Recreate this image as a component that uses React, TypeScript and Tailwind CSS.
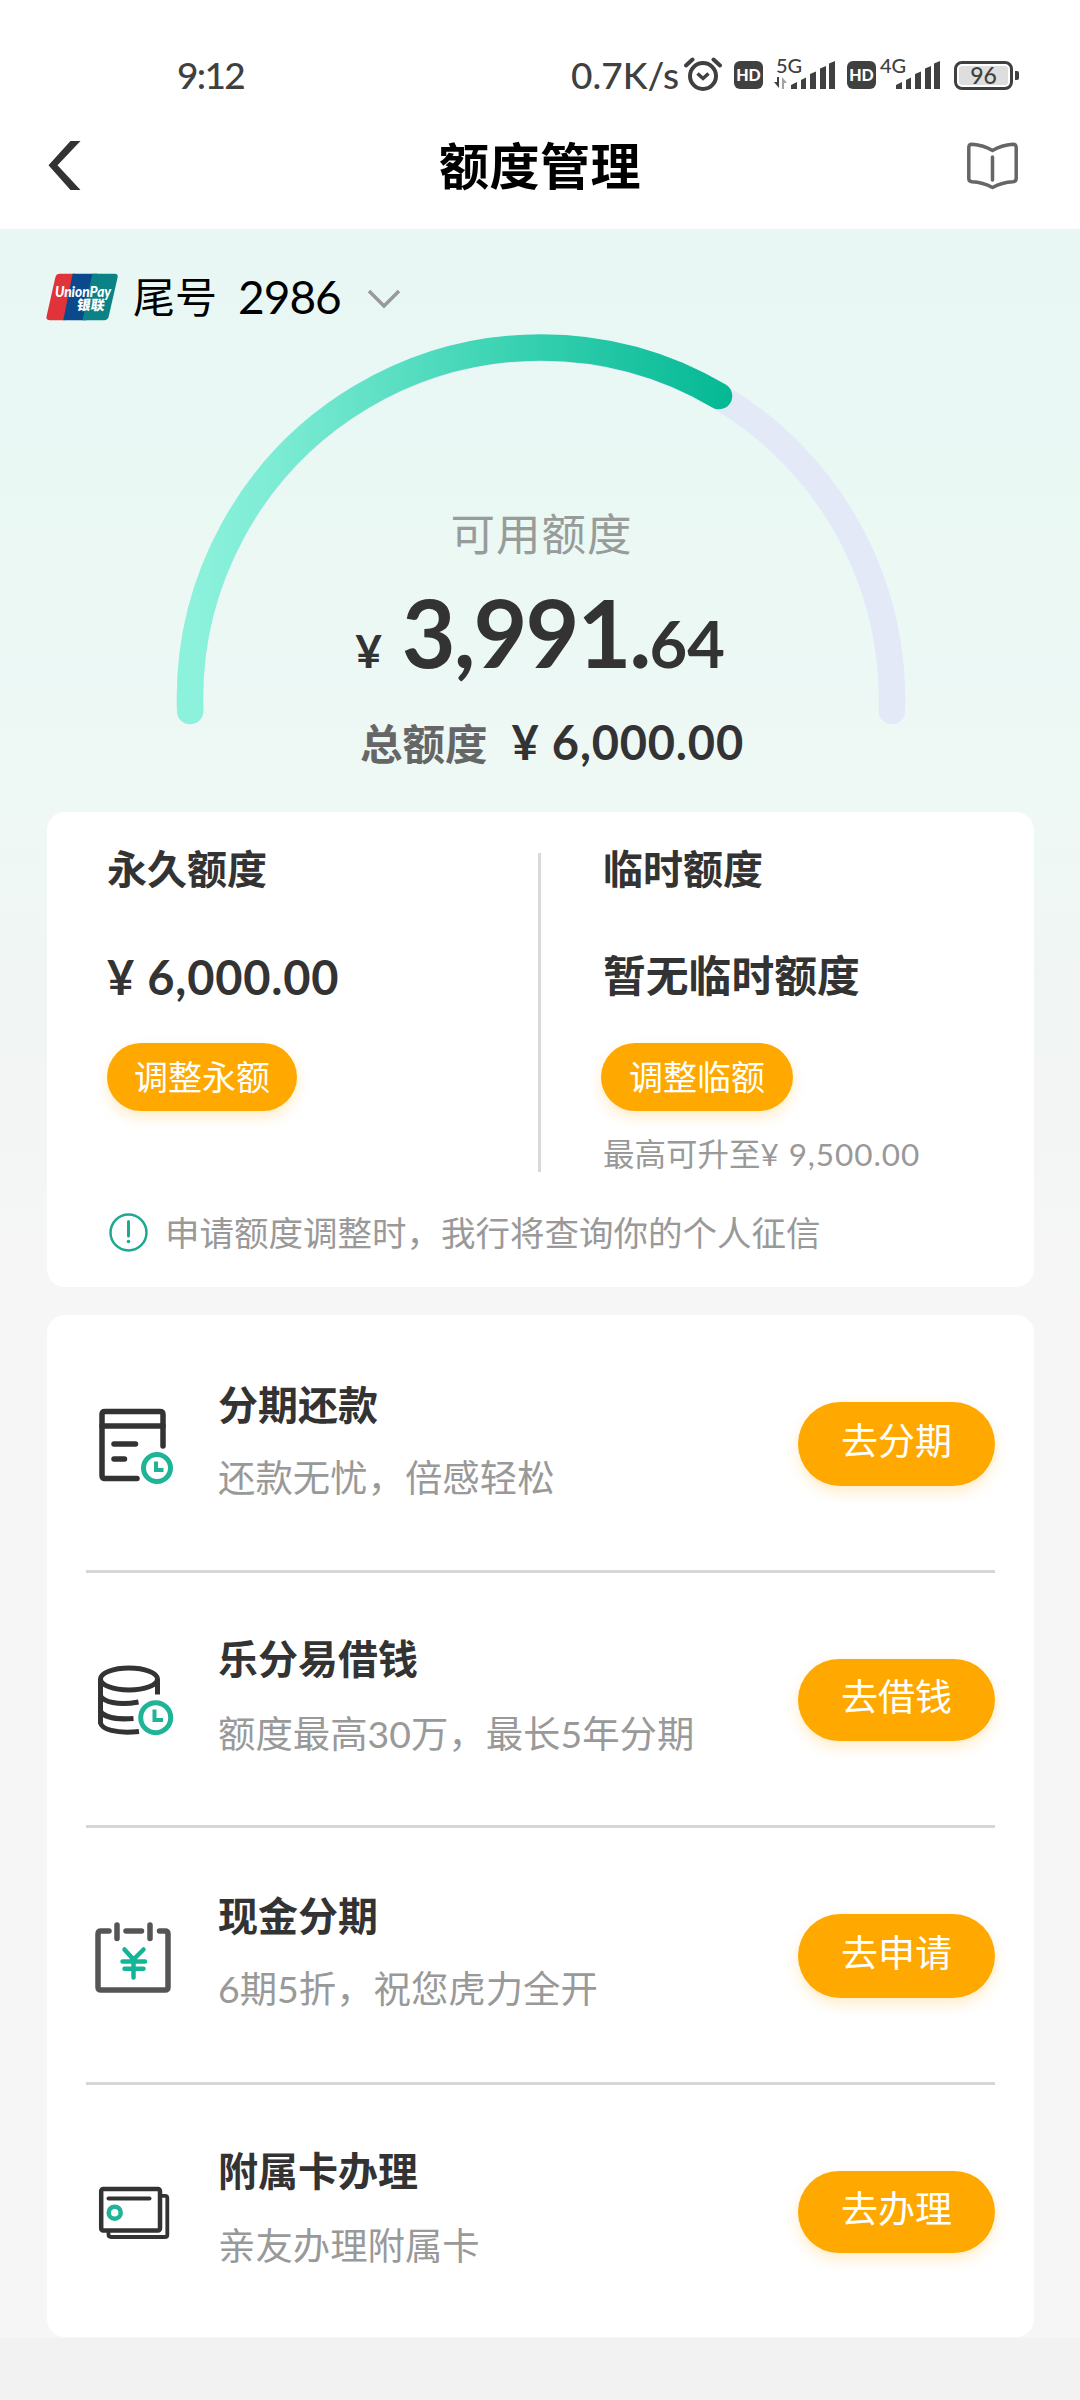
import type { ReactNode } from "react";
import { clsx } from "clsx";

const SignalBars = () => (
  <svg width="44" height="28" viewBox="0 0 44 28" fill="#404040">
    <path d="M0 28v-4l6-3v7z" />
    <path d="M10 28v-9l5-2.5V28z" />
    <path d="M19 28V13l6-2.5V28z" />
    <path d="M29 28V7.5l6-2.5V28z" />
    <path d="M38 28V2.5L44 0v28z" />
  </svg>
);

const HdBadge = () => (
  <div className="flex h-7 w-[29px] items-center justify-center rounded-[6px] bg-[#404040] text-[16px] font-black leading-none text-white">
    HD
  </div>
);

const StatusBar = () => (
  <div className="flex h-[100px] items-center pl-[177px] pr-[61px] pt-[50px] text-[#404040]">
    <span className="-mt-[2px] text-[37px] font-medium leading-none tracking-[-1.7px]">9:12</span>
    <span className="-mt-[2px] ml-auto mr-[5px] text-[37px] font-medium leading-none">0.7K/s</span>
    <svg className="mr-[12px] -mt-[3px]" width="38" height="36" viewBox="0 0 38 36" fill="none" stroke="#404040" strokeWidth="4">
      <circle cx="19" cy="20" r="13" />
      <path d="M13.5 17.5l5.5 5 5.5-5" strokeWidth="3.5" />
      <path d="M2 9.5l6.5-6M36 9.5l-6.5-6" strokeWidth="4" strokeLinecap="round" />
    </svg>
    <HdBadge />
    <div className="relative ml-[28px]">
      <span className="absolute -left-[15px] -top-[6px] text-[20px] font-medium leading-none">5G</span>
      <svg className="absolute -left-[17px] top-[16px]" width="14" height="12" viewBox="0 0 14 12">
        <path d="M5 0v11L0 5h3V0z" fill="#404040" />
        <path d="M8 12V0l5 6h-3v6z" fill="#a3a3a3" />
      </svg>
      <SignalBars />
    </div>
    <div className="ml-[12px]">
      <HdBadge />
    </div>
    <div className="relative ml-[20px]">
      <span className="absolute -left-[16px] -top-[6px] text-[20px] font-medium leading-none">4G</span>
      <SignalBars />
    </div>
    <div className="ml-[14px] flex h-[29px] w-[59px] items-center justify-center rounded-[8px] border-3 border-[#404040] p-[2px]">
      <span className="flex h-full w-full items-center justify-center rounded-[3px] bg-[#dedede] text-[23px] font-medium leading-none">96</span>
    </div>
    <span className="ml-[2px] h-[9px] w-[4px] rounded-r-[2px] bg-[#404040]" />
  </div>
);

const NavBar = () => (
  <div className="flex h-[129px] items-center justify-between pl-[48px] pr-[61px] pt-[2px]">
    <svg width="66" height="49" viewBox="0 0 66 49" fill="#333">
      <path d="M22.5 0H32.5L9.5 24.2 32.5 49H22.5L.5 24.2z" />
    </svg>
    <h1 className="text-[50px] font-bold leading-none tracking-[0.5px] text-black">额度管理</h1>
    <svg width="53" height="50" viewBox="0 0 53 50" fill="none" stroke="#666" strokeWidth="3.5" strokeLinecap="round" strokeLinejoin="round">
      <path d="M26.5 9.5C20 5.5 13 3.800 6 3.300Q2.8 3.300 2.8 6.5V37.5Q2.8 40.5 6 40.8C14 41.200 20 43 26.5 46.5C33 43 39 41.200 47 40.8Q50.2 40.5 50.2 37.5V6.5Q50.2 3.300 47 3.300C40 3.800 33 5.5 26.5 9.5z" />
      <path d="M26.5 16v23" />
    </svg>
  </div>
);

const UnionPayLogo = () => (
  <svg width="73" height="48" viewBox="0 0 74 48">
    <path d="M14 .5H30L19 47.5H4Q-.5 47.5 .7 43L9.5 4Q10.5 .5 14 .5z" fill="#e0343a" />
    <path d="M27 .5H52L41 47.5H17.5z" fill="#0a4a8c" />
    <path d="M47 .5H69.5Q73.5 .5 72.5 4.5L63.5 44Q62.5 47.5 59 47.5H37z" fill="#0b8285" />
    <text x="9" y="24" fill="#fff" fontSize="15" fontWeight="900" fontStyle="italic" textLength="57" lengthAdjust="spacingAndGlyphs">
      UnionPay
    </text>
    <text x="31" y="37" fill="#fff" fontSize="14" fontWeight="900" transform="skewX(-8) translate(5 0)">
      银联
    </text>
  </svg>
);

const CardSelector = () => (
  <div className="flex h-[96px] items-center pl-[46px] pt-[40px]">
    <UnionPayLogo />
    <span className="ml-[14px] text-[42px] leading-none text-black">尾号</span>
    <span className="ml-[21px] text-[46px] leading-none tracking-[-1px] text-black">2986</span>
    <svg className="ml-[26px] mt-[3px]" width="34" height="20" viewBox="0 0 34 20" fill="none" stroke="#999" strokeWidth="3.5">
      <path d="M2 2l15 15L32 2" />
    </svg>
  </div>
);

const LimitGauge = () => (
  <div className="grid h-[487px] grid-cols-1 grid-rows-1">
    <svg className="col-start-1 row-start-1" width="1080" height="487" viewBox="0 0 1080 487" fill="none" strokeWidth="26.5" strokeLinecap="round">
      <defs>
        <linearGradient id="gauge" x1="190" y1="0" x2="732" y2="0" gradientUnits="userSpaceOnUse">
          <stop offset="0" stopColor="#8df2dc" />
          <stop offset="0.15" stopColor="#7eecd5" />
          <stop offset="0.55" stopColor="#3fd5b5" />
          <stop offset="1" stopColor="#04b894" />
        </linearGradient>
      </defs>
      <path d="M190.2 386A351 351 0 1 1 891.8 386" stroke="#e4e9f7" />
      <path d="M190.2 386A351 351 0 0 1 719 71" stroke="url(#gauge)" />
    </svg>
    <div className="col-start-1 row-start-1 flex flex-col items-center">
      <div className="ml-[3px] mt-[187px] text-[44.5px] leading-none tracking-[1px] text-[#979c9a]">可用额度</div>
      <div className="mt-[29px] flex items-baseline font-bold leading-none text-[#333]">
        <span className="text-[46px]">¥</span>
        <span className="ml-[20px] text-[93px] tracking-[-2px]">3,991.</span>
        <span className="text-[65px]">64</span>
      </div>
      <div className="mt-[40px] ml-[24px] flex items-baseline leading-none">
        <span className="text-[42.5px] font-bold text-[#666]">总额度</span>
        <span className="ml-[24px] text-[47px] font-bold tracking-[0.8px] text-[#333]">¥ 6,000.00</span>
      </div>
    </div>
  </div>
);

const PillButton = ({ className, children }: { className?: string; children: ReactNode }) => (
  <button
    className={clsx(
      "flex items-center justify-center rounded-full bg-[#ffa900] leading-none text-white shadow-[0_6px_14px_rgba(255,169,0,0.22)]",
      className
    )}
  >
    {children}
  </button>
);

const LimitCard = () => (
  <section className="ml-[47px] mr-[46px] h-[475px] rounded-[18px] bg-white pt-[41px]">
    <div className="flex h-[319px]">
      <div className="flex w-[491px] flex-col items-start pl-[60px]">
        <h2 className="-mt-[4px] text-[40px] font-bold leading-none text-[#333]">永久额度</h2>
        <div className="mt-[65px] text-[47px] font-bold leading-none tracking-[0.8px] text-[#333]">¥ 6,000.00</div>
        <PillButton className="mt-[42px] h-[68px] w-[190px] text-[34px]">调整永额</PillButton>
      </div>
      <div className="w-[3px] shrink-0 bg-[#d9d9d9]" />
      <div className="flex flex-col items-start pl-[62px]">
        <h2 className="-mt-[4px] text-[40px] font-bold leading-none text-[#333]">临时额度</h2>
        <div className="mt-[66px] text-[42.8px] font-bold leading-none text-[#333]">暂无临时额度</div>
        <PillButton className="-ml-[2px] mt-[45px] h-[68px] w-[192px] text-[34px]">调整临额</PillButton>
        <div className="mt-[28px] text-[31.5px] leading-none text-[#999]">
          最高可升至<span className="tracking-[0.9px]">¥ 9,500.00</span>
        </div>
      </div>
    </div>
    <div className="mt-[41px] flex items-center pl-[62px]">
      <svg width="39" height="39" viewBox="0 0 39 39" fill="none" stroke="#1fa88f" strokeWidth="2.5">
        <circle cx="19.5" cy="19.5" r="18" />
        <path d="M19.5 8.5v14.5" strokeWidth="3" strokeLinecap="round" />
        <circle cx="19.5" cy="28.5" r="1.8" fill="#1fa88f" stroke="none" />
      </svg>
      <span className="ml-[17px] mt-[2px] text-[34.5px] leading-none text-[#999]">申请额度调整时，我行将查询你的个人征信</span>
    </div>
  </section>
);

const BillIcon = () => (
  <svg width="84" height="80" viewBox="0 0 84 80" fill="none" stroke="#333" strokeWidth="5.5" strokeLinecap="round" strokeLinejoin="round">
    <path d="M42 73.5H10Q7 73.5 7 70.5V9.5Q7 6.5 10 6.5H65Q68 6.5 68 9.5V41" />
    <path d="M7 21H68" />
    <path d="M19 39H40.5M19 54H29.5" />
    <g stroke="#1fb496" strokeWidth="5">
      <circle cx="62" cy="63" r="13.5" />
      <path d="M61 56.5V65H68.5" strokeWidth="4" strokeLinecap="butt" strokeLinejoin="miter" />
    </g>
  </svg>
);

const CoinsIcon = () => (
  <svg width="84" height="80" viewBox="0 0 84 80" fill="none" stroke="#333" strokeWidth="5">
    <ellipse cx="34" cy="19" rx="28.5" ry="11" />
    <path d="M5.5 19V63C7 69 20 74 44 71.5" />
    <path d="M62.5 19V34.5" />
    <path d="M5.5 36C9 41.5 22 46 43.5 42M5.5 51.5C9 56.5 20 60 38.5 58.5" />
    <g stroke="#1fb496">
      <circle cx="60.7" cy="57.7" r="15" />
      <path d="M59.5 49.5V60H68" strokeWidth="4" />
    </g>
  </svg>
);

const CalendarIcon = () => (
  <svg className="-ml-[4px]" width="88" height="80" viewBox="0 0 88 80" fill="none" stroke="#555" strokeWidth="5.5" strokeLinecap="round" strokeLinejoin="round">
    <path d="M18 13H10Q7 13 7 16V69Q7 72 10 72H74Q77 72 77 69V16Q77 13 74 13H68.5" />
    <path d="M35 13H50.5M26 7V20.5M59 7V20.5" />
    <path d="M33.5 31.5L42.5 41.5 52.5 31.5M42.5 41.5V59.5M31.5 43.5H54M33.5 50.8H52.5" stroke="#14b497" strokeWidth="4.5" />
  </svg>
);

const CardsIcon = () => (
  <svg width="84" height="60" viewBox="0 0 84 60" fill="none" stroke="#333" strokeWidth="4.5" strokeLinecap="round" strokeLinejoin="round">
    <rect x="6.2" y="6" width="58.8" height="41.5" rx="2" />
    <path d="M67 12.8H70Q72.3 12.8 72.3 15V52Q72.3 54 70 54H16Q13.5 54 13.5 51.5V49" strokeWidth="3.8" />
    <path d="M13.5 15.5H54.5" strokeWidth="4" />
    <circle cx="19.7" cy="29.7" r="6" stroke="#1fb496" />
  </svg>
);

// rows are not evenly sized, so each one carries its own heights
const services = [
  {
    title: "分期还款",
    desc: "还款无忧，倍感轻松",
    action: "去分期",
    icon: <BillIcon />,
    row: "h-[258px] border-b-3",
    iconTop: "mt-[90px]",
    textTop: "mt-[70px]",
    descTop: "mt-[33px]",
    button: "mt-[87px] h-[84px]",
  },
  {
    title: "乐分易借钱",
    desc: "额度最高30万，最长5年分期",
    action: "去借钱",
    icon: <CoinsIcon />,
    row: "h-[255px] border-b-3",
    iconTop: "mt-[87px]",
    textTop: "mt-[66px]",
    descTop: "mt-[36px]",
    button: "mt-[86px] h-[82px]",
  },
  {
    title: "现金分期",
    desc: "6期5折，祝您虎力全开",
    action: "去申请",
    icon: <CalendarIcon />,
    row: "h-[257px] border-b-3",
    iconTop: "mt-[90px]",
    textTop: "mt-[68px]",
    descTop: "mt-[34px]",
    button: "mt-[86px] h-[84px]",
  },
  {
    title: "附属卡办理",
    desc: "亲友办理附属卡",
    action: "去办理",
    icon: <CardsIcon />,
    row: "h-[252px]",
    iconTop: "mt-[98px]",
    textTop: "mt-[66px]",
    descTop: "mt-[36px]",
    button: "mt-[86px] h-[82px]",
  },
];

const ServiceList = () => (
  <section className="ml-[47px] mr-[46px] mt-[28px] rounded-[18px] bg-white px-[39px]">
    {services.map((item) => (
      <div key={item.title} className={clsx("flex items-start border-[#d6d6d6]", item.row)}>
        <div className={clsx("ml-[9px] w-[123px]", item.iconTop)}>{item.icon}</div>
        <div className={item.textTop}>
          <h3 className="text-[40px] font-bold leading-none text-[#333]">{item.title}</h3>
          <p className={clsx("mt-[34px] text-[37.4px] leading-none text-[#999]", item.descTop)}>{item.desc}</p>
        </div>
        <PillButton className={clsx("ml-auto w-[197px] pb-[8px] text-[37px]", item.button)}>{item.action}</PillButton>
      </div>
    ))}
  </section>
);

const App = () => {
  return (
    <div className="flex h-[2400px] w-[1080px] flex-col bg-[#f2f2f2] font-['Lato','Noto_Sans_CJK_SC',sans-serif]">
      <header className="bg-white">
        <StatusBar />
        <NavBar />
      </header>
      <main className="h-[2109px] bg-[linear-gradient(180deg,#e8f7f4_0px,#e9f8f4_150px,#edf8f5_470px,#eff8f5_590px,#f1f5f4_780px,#f6f6f6_1060px)]">
        <CardSelector />
        <LimitGauge />
        <LimitCard />
        <ServiceList />
      </main>
    </div>
  );
};

export default App;
